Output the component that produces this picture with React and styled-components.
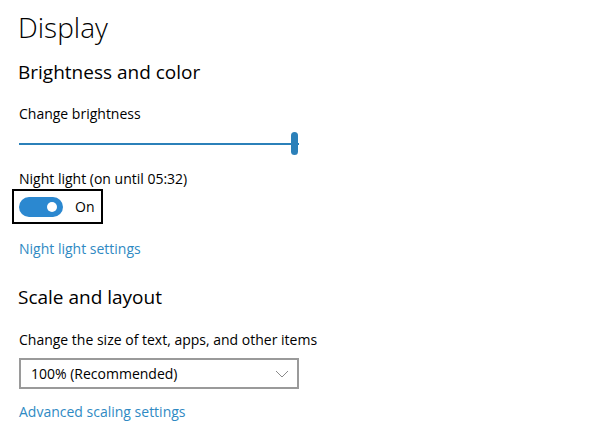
import styled, { createGlobalStyle } from 'styled-components';

const GlobalStyle = createGlobalStyle`
  body {
    margin: 0;
    background: #ffffff;
    font-family: "Segoe UI", "Open Sans", sans-serif;
    color: #000000;
  }
`;

const Page = styled.div`
  display: flex;
  flex-direction: column;
  align-items: flex-start;
  padding: 9px 0 0 19px;
`;

const Title = styled.h1`
  margin: 0 0 0 -1px;
  font-size: 28px;
  font-weight: 300;
  line-height: 36px;
`;

const SectionTitle = styled.h2`
  margin: ${p => p.$top || 0}px 0 0 -1px;
  font-size: 19px;
  font-weight: 400;
  line-height: 28px;
`;

const Label = styled.div`
  margin-top: ${p => p.$top || 0}px;
  font-size: 14px;
  line-height: 20px;
`;

const Slider = styled.div`
  position: relative;
  width: 280px;
  height: 24px;
  margin-top: 8px;
  display: flex;
  align-items: center;
`;

const Track = styled.div`
  width: 100%;
  height: 2px;
  background: #2b80b9;
`;

const Thumb = styled.div`
  position: absolute;
  right: 1px;
  top: 0;
  width: 7px;
  height: 23px;
  border-radius: 4px;
  background: #2b80b9;
`;

const FocusBox = styled.div`
  display: flex;
  align-items: center;
  gap: 12px;
  margin: 0 0 0 -7px;
  padding: 0 5px;
  width: 91px;
  height: 35px;
  box-sizing: border-box;
  border: 2px solid #000000;
`;

const Toggle = styled.div`
  display: flex;
  flex-shrink: 0;
  align-items: center;
  justify-content: flex-end;
  width: 44px;
  height: 20px;
  padding-right: 6px;
  box-sizing: border-box;
  border-radius: 10px;
  background: #2b88d0;
`;

const Knob = styled.div`
  width: 10px;
  height: 10px;
  border-radius: 50%;
  background: #ffffff;
`;

const ToggleText = styled.span`
  font-size: 14px;
  line-height: 20px;
`;

const Link = styled.a`
  margin-top: ${p => p.$top || 0}px;
  font-size: 14px;
  line-height: 20px;
  color: #2f8ac3;
  text-decoration: none;
`;

const Select = styled.div`
  display: flex;
  align-items: center;
  justify-content: space-between;
  margin-top: 8px;
  width: 280px;
  height: 31px;
  box-sizing: border-box;
  padding: 0 8px 0 10px;
  border: 2px solid #9a9a9a;
  font-size: 14px;
`;

function App() {
  return (
    <>
      <GlobalStyle />
      <Page>
        <Title>Display</Title>
        <SectionTitle $top={13}>Brightness and color</SectionTitle>
        <Label $top={18}>Change brightness</Label>
        <Slider>
          <Track />
          <Thumb />
        </Slider>
        <Label $top={13}>Night light (on until 05:32)</Label>
        <FocusBox>
          <Toggle>
            <Knob />
          </Toggle>
          <ToggleText>On</ToggleText>
        </FocusBox>
        <Link $top={15}>Night light settings</Link>
        <SectionTitle $top={24}>Scale and layout</SectionTitle>
        <Label $top={19}>Change the size of text, apps, and other items</Label>
        <Select>
          <span>100% (Recommended)</span>
          <svg width="14" height="8" viewBox="0 0 14 8">
            <path d="M1 1 L7 7 L13 1" fill="none" stroke="#8a8a8a" strokeWidth="1" />
          </svg>
        </Select>
        <Link $top={13}>Advanced scaling settings</Link>
      </Page>
    </>
  );
}

export default App;
